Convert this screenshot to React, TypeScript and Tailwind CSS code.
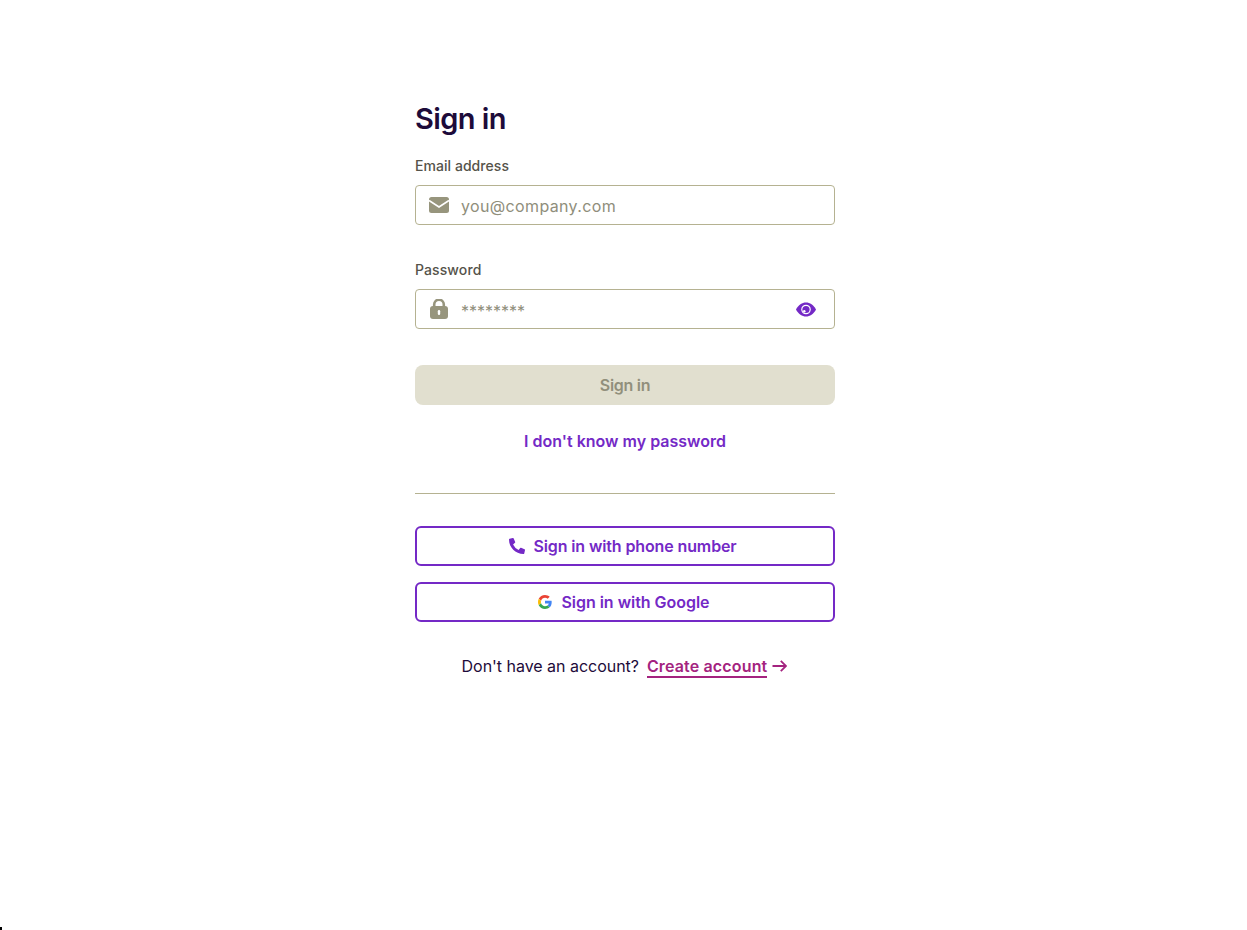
import React from "react";
import { FaPhoneAlt } from "react-icons/fa";

const GoogleIcon = () => (
  <svg width="14" height="14" viewBox="0 0 48 48" className="mr-[1px]">
    <path fill="#EA4335" d="M24 9.500c3.500 0 6.700 1.200 9.200 3.600l6.900-6.900C35.900 2.400 30.500 0 24 0 14.600 0 6.500 5.400 2.600 13.200l8 6.200C12.500 13.700 17.800 9.500 24 9.500z" />
    <path fill="#4285F4" d="M46.900 24.500c0-1.600-.1-3.100-.4-4.500H24v9h12.900c-.6 3-2.200 5.500-4.700 7.200l7.700 6c4.500-4.200 7-10.300 7-17.700z" />
    <path fill="#FBBC05" d="M10.600 28.600c-.5-1.400-.8-3-.8-4.600s.3-3.200.8-4.600l-8-6.200C.9 16.500 0 20.100 0 24s.9 7.500 2.600 10.800l8-6.200z" />
    <path fill="#34A853" d="M24 48c6.500 0 11.900-2.100 15.900-5.800l-7.700-6c-2.200 1.400-4.900 2.300-8.200 2.300-6.200 0-11.500-4.200-13.400-9.900l-8 6.200C6.500 42.600 14.600 48 24 48z" />
  </svg>
);

const MailIcon = () => (
  <svg width="20" height="16" viewBox="0 0 20 16" className="shrink-0">
    <rect width="20" height="16" rx="2.500" fill="#97957d" />
    <path d="M0 3.500 10 10l10-6.500" fill="none" stroke="#fff" strokeWidth="1.700" />
  </svg>
);

const LockIcon = () => (
  <svg width="18" height="20" viewBox="0 0 18 20" className="mx-[1px] shrink-0">
    <path d="M4.200 8V5.500a4.800 4.800 0 0 1 9.600 0V8" fill="none" stroke="#97957d" strokeWidth="2.600" />
    <rect y="7" width="18" height="13" rx="3" fill="#97957d" />
    <rect x="7.800" y="11" width="2.400" height="5" rx="1.200" fill="#fff" />
  </svg>
);

const EyeIcon = () => (
  <svg width="20" height="15" viewBox="0 0 20 15" className="ml-auto shrink-0">
    <path d="M0 7.500C2.500 2.800 6 .5 10 .5s7.500 2.300 10 7c-2.500 4.700-6 7-10 7s-7.500-2.300-10-7z" fill="#7429c6" />
    <circle cx="10" cy="7.500" r="4.800" fill="#fff" />
    <circle cx="10" cy="7.500" r="3.600" fill="#7429c6" />
    <circle cx="8.300" cy="9.200" r="1.200" fill="#fff" />
  </svg>
);

const ArrowIcon = () => (
  <svg width="15" height="12" viewBox="0 0 15 12" className="ml-[5px]">
    <path d="M0.500 6H14M8.800 0.800 14 6l-5.200 5.200" fill="none" stroke="#a4237f" strokeWidth="1.800" />
  </svg>
);

const OutlineButton = ({ icon, label, className }: { icon: React.ReactNode; label: string; className: string }) => (
  <button className={`flex h-10 w-full items-center justify-center gap-2 rounded-md border-2 border-[#7429c6] bg-white text-base font-semibold text-[#7429c6] ${className}`}>
    {icon}
    {label}
  </button>
);

export default function App() {
  return (
    <div className="relative min-h-[930px] bg-white font-['Inter',sans-serif]">
      <div className="ml-[415px] flex w-[420px] flex-col pt-[101px]">
        <h1 className="text-[29px] leading-9 font-semibold tracking-[-0.6px] text-[#1d0b3a]">Sign in</h1>

        <label className="mt-[19px] text-sm leading-5 font-medium tracking-[0.05px] text-[#55534a]">Email address</label>
        <div className="mt-[9px] flex h-10 items-center rounded border border-[#b5b291] bg-white pl-[13px]">
          <MailIcon />
          <span className="ml-3 pt-[2px] text-base tracking-[0.35px] text-[#8f8e7b]">you@company.com</span>
        </div>

        <label className="mt-[35px] text-sm leading-5 font-medium tracking-[0.1px] text-[#55534a]">Password</label>
        <div className="mt-[9px] flex h-10 items-center rounded border border-[#b5b291] bg-white pl-[13px] pr-[18px]">
          <LockIcon />
          <span className="ml-3 pt-1 text-base text-[#8f8e7b]">********</span>
          <EyeIcon />
        </div>

        <button className="mt-9 h-10 rounded-lg bg-[#e1dfcf] text-base font-semibold tracking-[-0.3px] text-[#918f7c]">Sign in</button>

        <a className="mt-6 text-center text-base leading-6 font-semibold text-[#7429c6]">I don't know my password</a>

        <hr className="mt-10 border-[#b5b291]" />

        <div className="mt-8 flex flex-col gap-4">
          <OutlineButton icon={<FaPhoneAlt className="h-4 w-4" />} label="Sign in with phone number" className="pr-1 tracking-[-0.12px]" />
          <OutlineButton icon={<GoogleIcon />} label="Sign in with Google" className="pr-[2px] tracking-[-0.03px]" />
        </div>

        <div className="mt-8 flex items-center justify-center pr-[1px] text-base leading-6">
          <span className="tracking-[-0.03px] text-[#1d0b3a]">Don't have an account?</span>
          <a className="ml-2 border-b-2 border-[#a4237f] pt-[2px] leading-[19px] font-semibold tracking-[0.15px] text-[#a4237f]">Create account</a>
          <ArrowIcon />
        </div>
      </div>
      <div className="absolute bottom-0 left-0 h-[3px] w-[2px] bg-black" />
    </div>
  );
}
